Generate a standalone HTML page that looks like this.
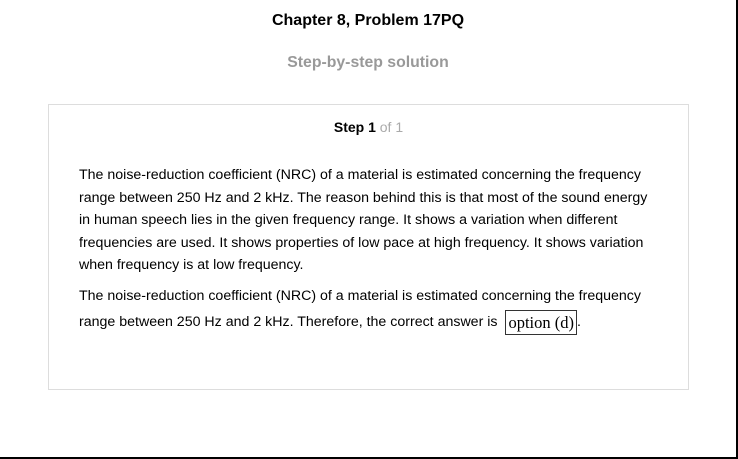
<!DOCTYPE html>
<html><head><style>
body{margin:0;width:738px;height:459px;position:relative;background:#fff;font-family:"Liberation Sans",Arial,sans-serif;overflow:hidden}
.frame{position:absolute;left:0;top:0;width:736px;height:457px;border-right:2px solid #000;border-bottom:2px solid #000;}
h1{position:absolute;top:12px;left:0;width:736px;text-align:center;font-size:16px;font-weight:bold;margin:0;color:#000}
h2{position:absolute;top:54px;left:0;width:736px;text-align:center;font-size:15.8px;font-weight:bold;margin:0;color:#999}
.box{position:absolute;left:48px;top:104px;width:639px;height:284px;border:1px solid #ddd}
.step{position:absolute;top:14px;width:100%;text-align:center;font-size:14px;font-weight:bold}
.step span{color:#aaa;font-weight:normal}
p{position:absolute;left:30px;width:575px;margin:0;font-size:14.2px;line-height:22.6px;color:#000}
.opt{display:inline-block;border:1px solid #333;padding:0 2px;font-family:"Liberation Serif",serif;font-size:16.5px;line-height:23px;margin-left:4px;vertical-align:-2px}
</style></head><body>
<div class="frame"></div>
<h1>Chapter 8, Problem 17PQ</h1>
<h2>Step-by-step solution</h2>
<div class="box">
<div class="step">Step 1 <span>of 1</span></div>
<p style="top:59px">The noise-reduction coefficient (NRC) of a material is estimated concerning the frequency range between 250 Hz and 2 kHz. The reason behind this is that most of the sound energy in human speech lies in the given frequency range. It shows a variation when different frequencies are used. It shows properties of low pace at high frequency. It shows variation when frequency is at low frequency.</p>
<p style="top:178px;line-height:26px">The noise-reduction coefficient (NRC) of a material is estimated concerning the frequency range between 250 Hz and 2 kHz. Therefore, the correct answer is <span class="opt">option (d)</span>.</p>
</div>
</body></html>
